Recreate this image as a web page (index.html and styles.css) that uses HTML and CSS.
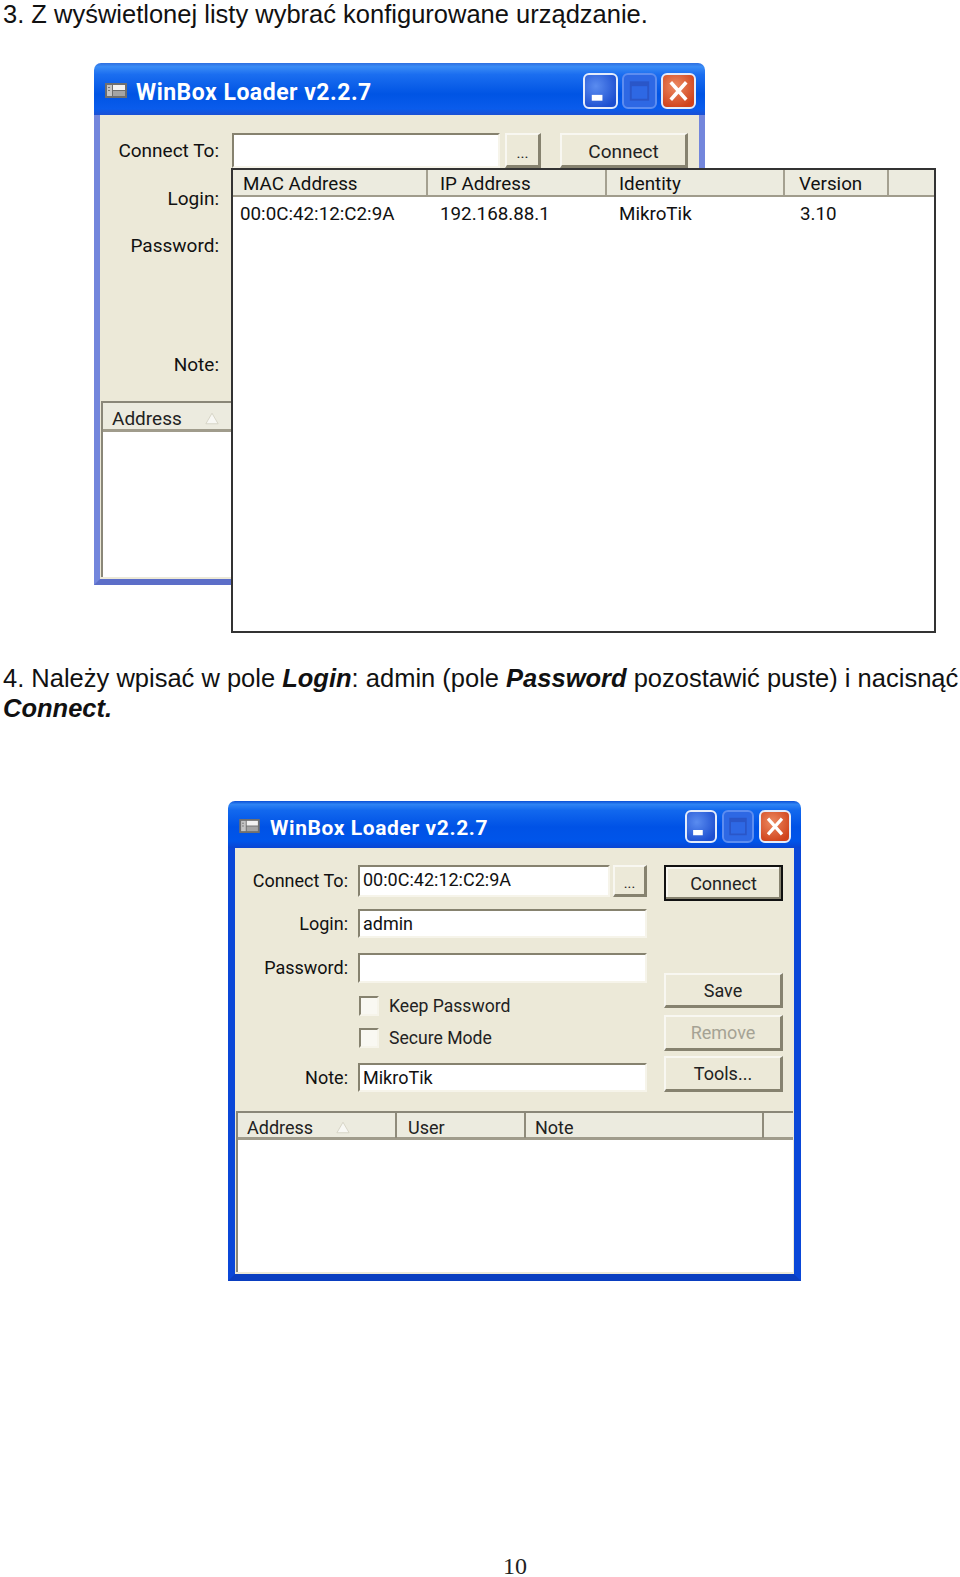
FILE: index.html
```html
<!DOCTYPE html>
<html lang="pl">
<head>
<meta charset="utf-8">
<title>WinBox</title>
<link rel="stylesheet" href="styles.css">
</head>
<body>
<main class="page">
  <p class="step">3. Z wyświetlonej listy wybrać konfigurowane urządzanie.</p>

  <section class="win win-a">
    <header class="titlebar">
      <svg class="appicon" viewBox="0 0 22 15"><rect width="22" height="15" fill="#6f6f6f"/><rect x="2" y="2" width="5" height="11" fill="#c4c4c4"/><rect x="3" y="4" width="2" height="1" fill="#777"/><rect x="3" y="7" width="2" height="1" fill="#777"/><rect x="8" y="2" width="12" height="5" fill="#f2f2f2"/><rect x="8" y="8" width="12" height="5" fill="#a4a4a4"/></svg>
      <h2 class="wintitle">WinBox Loader v2.2.7</h2>
      <div class="ctrls">
        <span class="ctrl ctrl-min"><svg viewBox="0 0 32 32"><rect x="7" y="20" width="11" height="6" fill="#fff"/></svg></span>
        <span class="ctrl ctrl-max"><svg viewBox="0 0 32 32"><rect x="7" y="7" width="18" height="18" fill="none" stroke="#2a56c8" stroke-width="2"/><rect x="7" y="7" width="18" height="4" fill="#2a56c8"/></svg></span>
        <span class="ctrl ctrl-close"><svg viewBox="0 0 32 32"><path d="M8 7 L24 25 M24 7 L8 25" stroke="#fff" stroke-width="3.6" fill="none"/></svg></span>
      </div>
    </header>
    <div class="winbody">
      <div class="form-a">
        <label class="lbl">Connect To:</label>
        <div class="field"></div>
        <button class="btn btn-dots">...</button>
        <button class="btn btn-go">Connect</button>
        <label class="lbl lbl-login">Login:</label>
        <label class="lbl lbl-pass">Password:</label>
        <label class="lbl lbl-note">Note:</label>
      </div>
      <div class="list list-a">
        <div class="listhead"><span class="hcell">Address<svg class="sort" viewBox="0 0 16 14"><path d="M8 1 L15 13 H1 Z" fill="#f8f8f4" stroke="#d4d1c2"/></svg></span></div>
      </div>
    </div>
    <div class="dropdown">
      <div class="dd-head">
        <span class="dd-h">MAC Address</span>
        <span class="dd-h">IP Address</span>
        <span class="dd-h">Identity</span>
        <span class="dd-h">Version</span>
        <span class="dd-h dd-h-end"></span>
      </div>
      <div class="dd-row">
        <span class="dd-c dd-c-first">00:0C:42:12:C2:9A</span>
        <span class="dd-c">192.168.88.1</span>
        <span class="dd-c">MikroTik</span>
        <span class="dd-c dd-c-ver">3.10</span>
      </div>
    </div>
  </section>

  <p class="step step-b">4. Należy wpisać w pole <b><i>Login</i></b>: admin (pole <b><i>Password</i></b> pozostawić puste) i nacisnąć<br><b><i>Connect.</i></b></p>

  <section class="win win-b">
    <header class="titlebar">
      <svg class="appicon" viewBox="0 0 22 15"><rect width="22" height="15" fill="#6f6f6f"/><rect x="2" y="2" width="5" height="11" fill="#c4c4c4"/><rect x="3" y="4" width="2" height="1" fill="#777"/><rect x="3" y="7" width="2" height="1" fill="#777"/><rect x="8" y="2" width="12" height="5" fill="#f2f2f2"/><rect x="8" y="8" width="12" height="5" fill="#a4a4a4"/></svg>
      <h2 class="wintitle">WinBox Loader v2.2.7</h2>
      <div class="ctrls">
        <span class="ctrl ctrl-min"><svg viewBox="0 0 32 32"><rect x="7" y="20" width="11" height="6" fill="#fff"/></svg></span>
        <span class="ctrl ctrl-max"><svg viewBox="0 0 32 32"><rect x="7" y="7" width="18" height="18" fill="none" stroke="#2a56c8" stroke-width="2"/><rect x="7" y="7" width="18" height="4" fill="#2a56c8"/></svg></span>
        <span class="ctrl ctrl-close"><svg viewBox="0 0 32 32"><path d="M8 7 L24 25 M24 7 L8 25" stroke="#fff" stroke-width="3.6" fill="none"/></svg></span>
      </div>
    </header>
    <div class="winbody">
      <div class="form-b">
        <div class="fields">
          <div class="frow frow-1">
            <label class="lbl">Connect To:</label>
            <div class="field field-short">00:0C:42:12:C2:9A</div>
            <button class="btn btn-dots">...</button>
          </div>
          <div class="frow frow-2">
            <label class="lbl">Login:</label>
            <div class="field field-wide">admin</div>
          </div>
          <div class="frow frow-3">
            <label class="lbl">Password:</label>
            <div class="field field-wide"></div>
          </div>
          <div class="crow crow-1"><span class="check"></span>Keep Password</div>
          <div class="crow crow-2"><span class="check"></span>Secure Mode</div>
          <div class="frow frow-6">
            <label class="lbl">Note:</label>
            <div class="field field-wide">MikroTik</div>
          </div>
        </div>
        <div class="actions">
          <button class="btn btn-default">Connect</button>
          <button class="btn btn-save">Save</button>
          <button class="btn btn-remove">Remove</button>
          <button class="btn btn-tools">Tools...</button>
        </div>
      </div>
      <div class="list list-b">
        <div class="listhead">
          <span class="hcell">Address<svg class="sort" viewBox="0 0 16 14"><path d="M8 1 L15 13 H1 Z" fill="#f8f8f4" stroke="#d4d1c2"/></svg></span>
          <span class="hcell hcell-user">User</span>
          <span class="hcell">Note</span>
          <span class="hcell"></span>
        </div>
      </div>
    </div>
  </section>

  <footer class="pageno">10</footer>
</main>
</body>
</html>
```

FILE: styles.css
```css
* { box-sizing: border-box; }
html, body { margin: 0; padding: 0; background: #fff; }
.page { width: 960px; min-height: 1577px; font-family: "Liberation Sans", Arial, sans-serif; color: #111; }

.step { margin: 0; padding-left: 3px; font-size: 25.5px; line-height: 29.4px; color: #111; white-space: nowrap; }
.step-b { margin-top: 79px; }

.win { position: relative; display: flex; flex-direction: column; font-family: Roboto, "Liberation Sans", sans-serif; }
.win-a { width: 611px; height: 522px; margin: 34px 0 0 94px; font-size: 19px; }
.win-b { width: 573px; height: 480px; margin: 78px 0 0 228px; font-size: 18px; }

.titlebar {
  display: flex; align-items: center; flex: none;
  border-radius: 7px 7px 0 0;
  background: linear-gradient(#0a4fd6 0, #2f84f4 7%, #1268ee 20%, #0052e6 55%, #0055ea 85%, #0a45d2 100%);
  color: #fff;
}
.win-a .titlebar { height: 52px; padding: 3px 9px 0 11px; background: linear-gradient(#2f6fe0 0, #3a8cf6 7%, #1b6ef0 22%, #0054e4 60%, #0a5cec 88%, #1b50d4 100%); }
.win-b .titlebar { height: 47px; padding: 3px 10px 0 11px; }
.appicon { flex: none; display: block; }
.win-a .appicon { width: 22px; height: 15px; }
.win-b .appicon { width: 21px; height: 14px; }
.wintitle { margin: 0; padding-top: 4px; font-weight: 700; white-space: nowrap; }
.win-a .wintitle { margin-left: 9px; font-size: 23px; letter-spacing: 0.5px; }
.win-b .wintitle { margin-left: 10px; font-size: 21px; letter-spacing: 0.6px; }
.ctrls { margin-left: auto; display: flex; }
.win-a .ctrls { gap: 4px; }
.win-b .ctrls { gap: 5px; }
.ctrl { display: block; border: 2px solid #e4ecfb; border-radius: 6px; }
.win-a .ctrl { width: 35px; height: 36px; }
.win-b .ctrl { width: 32px; height: 33px; }
.ctrl svg { display: block; width: 100%; height: 100%; }
.ctrl-min { background: radial-gradient(circle at 35% 35%, #5a8cf0, #1d4fd0 80%); }
.ctrl-max { border-color: #5d8df0; background: #2e68e4; }
.ctrl-close { background: radial-gradient(circle at 40% 35%, #ec8a62, #d0431c 80%); }

.winbody { flex: 1; display: flex; flex-direction: column; background: #ece9d8; padding-bottom: 2px; }
.win-a .winbody { border: 6px solid #7386dc; border-top: 0; border-bottom-color: #5c6ec8; }
.win-b .winbody { border: 7px solid #0a47d8; border-top: 0; border-bottom-color: #0a3ec0; }

.lbl { text-align: right; white-space: nowrap; align-self: center; line-height: 1; }
.field { background: #fff; border: 2px solid; border-color: #86826f #f6f4ea #f6f4ea #86826f; white-space: nowrap; overflow: hidden; }
.btn {
  font: inherit; color: #222; padding: 0; background: #ece9d8; text-align: center;
  border: 2px solid; border-color: #f8f7f1 #86826f #86826f #f8f7f1;
  border-right-width: 3px; border-bottom-width: 3px;
}
.btn-dots { font-size: 0.8em; padding-top: 6px; }

.form-a { display: grid; padding-top: 18px; grid-template-columns: 119px 285px 37px 1fr; }
.form-a .lbl { grid-column: 1; }
.form-a .field { grid-column: 2; margin-left: 13px; width: 268px; height: 35px; }
.form-a .btn-dots { grid-column: 3; margin-left: 1px; width: 36px; height: 35px; }
.form-a .btn-go { grid-column: 4; margin-left: 19px; width: 128px; height: 35px; padding-top: 3px; }
.lbl-login { margin-top: 16px; height: 30px; line-height: 30px; }
.lbl-pass { margin-top: 17px; height: 30px; line-height: 30px; }
.lbl-note { margin-top: 89px; height: 30px; line-height: 30px; }

.list { background: #fff; flex: 1; border-left: 2px solid #8a8778; }
.list-a { margin: 21px 0 0 1px; }
.list-b { margin: 19px 1px 0 1px; }
.listhead { display: grid; background: #ecebdf; border-top: 2px solid #8a8778; border-bottom: 3px solid #a09c8c; }
.list-a .listhead { height: 31px; grid-template-columns: 1fr; }
.list-b .listhead { height: 29px; grid-template-columns: 159px 129px 238px 1fr; }
.hcell { display: flex; align-items: center; padding: 4px 0 0 9px; border-right: 2px solid #8f8b7b; white-space: nowrap; color: #222; }
.hcell-user { padding-left: 11px; }
.hcell:last-child { border-right: 0; }
.sort { width: 14px; height: 13px; margin-left: 23px; }

.dropdown { position: absolute; left: 137px; top: 105px; width: 705px; height: 465px; background: #fff; border: 2px solid #333; font-size: 18.8px; }
.dd-head { display: grid; grid-template-columns: 195px 179px 178px 104px 1fr; height: 27px; background: #ecebdf; border-bottom: 2px solid #a09c8c; }
.dd-h { display: flex; align-items: center; padding: 3px 0 0 12px; border-right: 2px solid #a4a090; white-space: nowrap; }
.dd-h:first-child { padding-left: 10px; }
.dd-h:nth-child(4) { padding-left: 14px; }
.dd-h-end { border-right: 0; }
.dd-row { display: grid; grid-template-columns: 195px 179px 178px 104px; padding-top: 6px; }
.dd-c { padding-left: 12px; white-space: nowrap; }
.dd-c-first { padding-left: 7px; }
.dd-c-ver { padding-left: 15px; }

.form-b { display: flex; padding-top: 17px; }
.fields { width: 412px; display: flex; flex-direction: column; }
.frow { display: flex; align-items: stretch; }
.frow .lbl { width: 113px; flex: none; }
.frow .field { margin-left: 10px; padding: 3px 0 0 3px; line-height: 20px; }
.frow-1 { height: 32px; }
.frow-2 { height: 29px; margin-top: 12px; }
.frow-3 { height: 30px; margin-top: 15px; }
.frow-6 { height: 29px; margin-top: 15px; }
.field-short { width: 252px; }
.field-wide { width: 289px; }
.frow-1 .btn-dots { width: 34px; margin-left: 3px; }
.crow { display: flex; align-items: center; height: 20px; padding-left: 124px; white-space: nowrap; color: #222; font-size: 17.6px; }
.crow-1 { margin-top: 13px; }
.crow-2 { margin-top: 12px; }
.check { width: 20px; height: 20px; margin-right: 10px; background: #f9f8f2; border: 2px solid; border-color: #86826f #f6f4ea #f6f4ea #86826f; flex: none; }
.actions { margin-left: 17px; width: 119px; display: flex; flex-direction: column; }
.actions .btn { width: 119px; flex: none; }
.btn-default { height: 36px; border-color: #111; box-shadow: inset -2px -2px 0 #86826f, inset 2px 2px 0 #f8f7f1; border-width: 2px; }
.btn-save { height: 35px; margin-top: 72px; }
.btn-remove { height: 36px; margin-top: 7px; color: #a5a294; }
.btn-tools { height: 36px; margin-top: 5px; }

.pageno { margin: 273px 0 0 0; padding-left: 503px; font-family: "Liberation Serif", "Times New Roman", serif; font-size: 24px; line-height: 24px; color: #222; }
```
